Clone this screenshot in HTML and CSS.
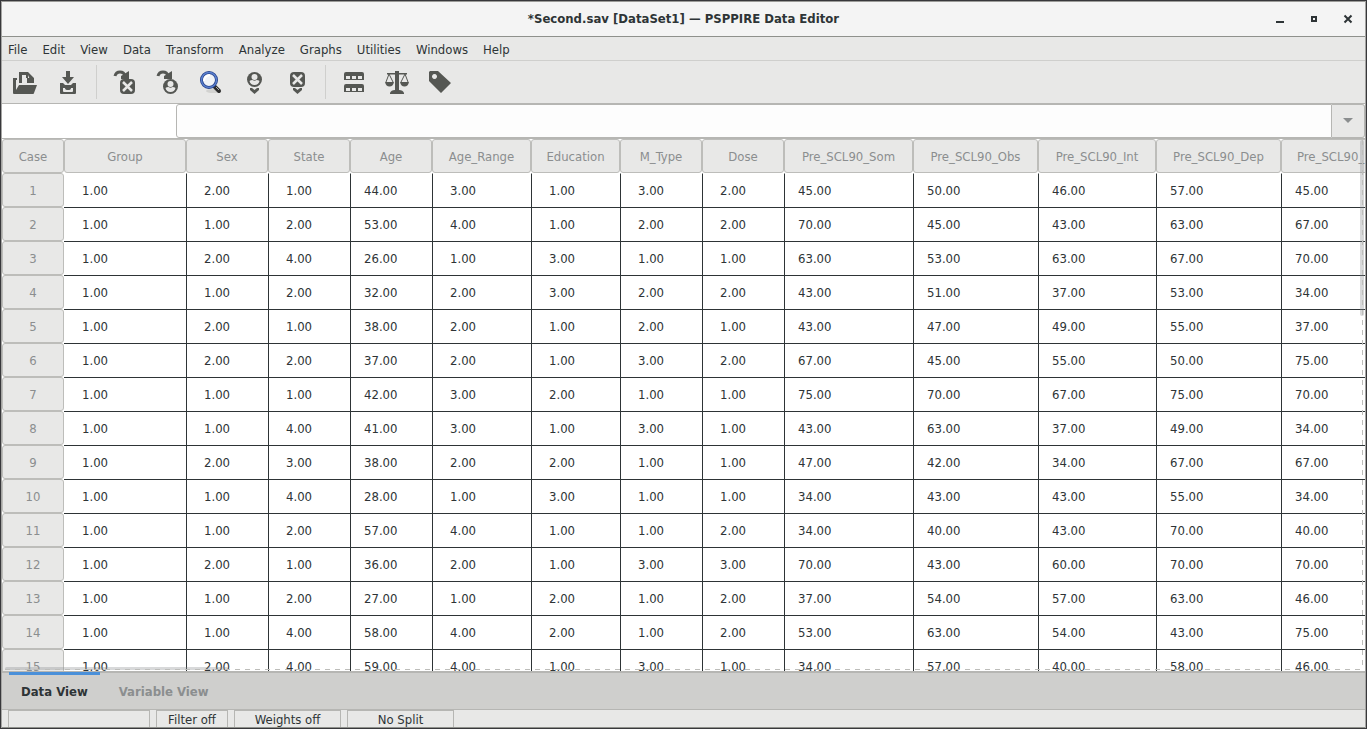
FILE: index.html
```html
<!DOCTYPE html>
<html lang="en">
<head>
<meta charset="utf-8">
<title>PSPPIRE Data Editor</title>
<link rel="stylesheet" href="styles.css">
</head>
<body>
<div class="window">
  <header class="titlebar">
    <h1 class="title">*Second.sav [DataSet1] — PSPPIRE Data Editor</h1>
    <div class="controls">
      <button class="control" aria-label="Minimize"><svg width="10" height="10" viewBox="0 0 10 10"><path d="M1 7h8v2H1z"/></svg></button>
      <button class="control" aria-label="Maximize"><svg width="10" height="10" viewBox="0 0 10 10"><path fill-rule="evenodd" d="M2 2h6v6H2zM4 4v2h2V4z"/></svg></button>
      <button class="control" aria-label="Close"><svg width="10" height="10" viewBox="0 0 10 10"><path d="M1.500 1.500l7 7M8.500 1.500l-7 7" stroke="#2e3436" stroke-width="2"/></svg></button>
    </div>
  </header>
  <nav class="menubar">
    <button class="menu">File</button><button class="menu">Edit</button><button class="menu">View</button><button class="menu">Data</button><button class="menu">Transform</button><button class="menu">Analyze</button><button class="menu">Graphs</button><button class="menu">Utilities</button><button class="menu">Windows</button><button class="menu">Help</button>
  </nav>
  <div class="toolbar">
    <button class="tool" aria-label="Open"><svg class="icon" viewBox="0 0 24 24"><path d="M0 8h4v2H3v10l3-5h18l-3 8q0 1-1 1H1q-1 0-1-1z"/><path d="M6 13V2h9l6 6v5h-7V8h-1V5H9v8zM15 5v3h3v4"/></svg></button>
    <button class="tool" aria-label="Save"><svg class="icon" viewBox="0 0 24 24"><path d="M10 1h4v6h4l-6 7-6-7h4z"/><path fill-rule="evenodd" d="M4 13h3l2 2h6l2-2h3v10q0 1-1 1H5q-1 0-1-1zM7 18v3q0 1 1 1h8q1 0 1-1v-3h-2q0 2-3 2t-3-2z"/></svg></button>
    <span class="separator"></span>
    <button class="tool" aria-label="Go to case"><svg class="icon" viewBox="0 0 24 24"><path class="line" d="M2 6q1-4 5-4t5 4"/><path d="M8 6l8-5v8H8z"/><rect x="7" y="9" width="15" height="15" rx="4"/><path class="cut" d="M10 12l9 9M19 12l-9 9"/></svg></button>
    <button class="tool" aria-label="Go to variable"><svg class="icon" viewBox="0 0 24 24"><path class="line" d="M2 6q1-4 5-4t5 4"/><path d="M8 6l8-5v8H8z"/><circle cx="14.500" cy="16.500" r="7.500"/><circle class="light" cx="14.500" cy="14" r="3"/><path class="light" d="M9.500 18q1-1 3-1 2 1.500 4 0 2 0 3 1-1 4-5 4t-5-4z"/></svg></button>
    <button class="tool" aria-label="Find"><svg class="icon" viewBox="0 0 24 24"><ellipse cx="14" cy="21" rx="7" ry="2" fill="#d2d2d0"/><path d="M15 16l5 5" stroke="#2b2b2b" stroke-width="4" stroke-linecap="round"/><path d="M17 17l3 3" stroke="#aaa" stroke-width="1"/><circle cx="10" cy="10" r="7.500" fill="#f0f3f8" stroke="#233f88" stroke-width="3"/><circle cx="10" cy="10" r="7.500" fill="none" stroke="#5b80cf" stroke-width="1.500"/><path d="M5 11q0-5 6-6" fill="none" stroke="#fff" stroke-width="2"/></svg></button>
    <button class="tool" aria-label="Insert case"><svg class="icon" viewBox="0 0 24 24"><circle cx="12.500" cy="9.500" r="7.500"/><circle class="light" cx="12.500" cy="7" r="3"/><path class="light" d="M7.500 11q1-1 3-1 2 1.500 4 0 2 0 3 1-1 4-5 4t-5-4z"/><path d="M8 18h2l2.500 2 2.500-2h2v2l-4.500 4L8 20z"/></svg></button>
    <button class="tool" aria-label="Insert variable"><svg class="icon" viewBox="0 0 24 24"><rect x="5" y="2" width="15" height="15" rx="4"/><path class="cut" d="M8 5l9 9M17 5l-9 9"/><path d="M8 18h2l2.500 2 2.500-2h2v2l-4.500 4L8 20z"/></svg></button>
    <span class="separator"></span>
    <button class="tool" aria-label="Split file"><svg class="icon" viewBox="0 0 24 24"><path fill-rule="evenodd" d="M4 2h16q2 0 2 2v6H2V4q0-2 2-2zM4 6v3h4V6zM10 6v3h4V6zM16 6v3h4V6zM4 14h16q2 0 2 2v6H2v-6q0-2 2-2zM4 18v3h4v-3zM10 18v3h4v-3zM16 18v3h4v-3z"/></svg></button>
    <button class="tool" aria-label="Weight cases"><svg class="icon" viewBox="0 0 24 24"><path d="M10 1h4v2h8v1.500h-8V20q4 0 5 3v1H5v-1q1-3 5-3V4.500H2V3h8z"/><path class="thin" d="M4 4L1 12M4 4l4 8M20 4l-4 8M20 4l3 8"/><path d="M0 12h9q-1 4.500-4.500 4.500T0 12zM15 12h9q-1 4.500-4.500 4.500T15 12z"/></svg></button>
    <button class="tool" aria-label="Value labels"><svg class="icon" viewBox="0 0 24 24"><path fill-rule="evenodd" d="M1 2l1-1h8l13 12-10 10L1 11zM6.500 4a2.500 2.500 0 1 0 .01 0z"/></svg></button>
  </div>
  <div class="entry-row">
    <output class="cell-ref" aria-label="Current cell"></output>
    <input class="cell-entry" type="text" aria-label="Cell value">
    <button class="entry-drop" aria-label="Show values"><svg width="10" height="6" viewBox="0 0 10 6"><path d="M0 0h10L5 5z" fill="#8b8e8f"/></svg></button>
  </div>
  <main class="sheet">
    <table class="grid">
      <colgroup><col class="w-case"><col class="w-group"><col class="w-82"><col class="w-82"><col class="w-82"><col class="w-99"><col class="w-89"><col class="w-82"><col class="w-82"><col class="w-129"><col class="w-125"><col class="w-118"><col class="w-125"><col class="w-125"></colgroup>
      <thead><tr><th>Case</th><th>Group</th><th>Sex</th><th>State</th><th>Age</th><th>Age_Range</th><th>Education</th><th>M_Type</th><th>Dose</th><th>Pre_SCL90_Som</th><th>Pre_SCL90_Obs</th><th>Pre_SCL90_Int</th><th>Pre_SCL90_Dep</th><th class="clipped">Pre_SCL90_</th></tr></thead>
      <tbody id="cases"></tbody>
    </table>
    <div class="scroll-y"></div>
    <div class="scroll-x"></div>
    <div class="edge-y"></div>
    <div class="edge-x"></div>
  </main>
  <div class="tabs" role="tablist">
    <button class="tab active" role="tab" aria-selected="true">Data View</button>
    <button class="tab" role="tab" aria-selected="false">Variable View</button>
  </div>
  <footer class="statusbar">
    <span class="status wide"></span>
    <span class="status narrow">Filter off</span>
    <span class="status">Weights off</span>
    <span class="status">No Split</span>
  </footer>
</div>
<script src="data.js"></script>
</body>
</html>
```

FILE: styles.css
```css
* { box-sizing: border-box; }

body {
  margin: 0;
  font: 13px/18px "DejaVu Sans Condensed", "Noto Sans", sans-serif;
  color: #2e3436;
}

button, input {
  font: inherit;
  color: inherit;
  background: none;
  border: 0;
  border-radius: 0;
  margin: 0;
  padding: 0;
}

.window {
  display: flex;
  flex-direction: column;
  height: 100vh;
  padding: 0 1px;
  border: 1px solid #38383b;
  background: #a5a5a3;
  overflow: hidden;
}

.titlebar {
  position: relative;
  flex: none;
  height: 36px;
  display: flex;
  align-items: center;
  justify-content: center;
  background: #f4f4f4;
  border-top: 1px solid #9b9b98;
  border-bottom: 1px solid #8f918c;
}

.title { margin: 0; font-size: 13px; font-weight: bold; }

.controls {
  position: absolute;
  right: 0;
  display: flex;
}

.control { width: 34px; height: 34px; display: grid; place-items: center; }
.control svg { fill: #2e3436; }

.menubar {
  flex: none;
  display: flex;
  height: 24px;
  background: #e8e8e7;
  border-bottom: 1px solid #cfcfcd;
}

.menu { padding: 2px 8px 0 7px; }
.menu:first-child { padding-left: 6px; }

.toolbar {
  flex: none;
  display: flex;
  align-items: center;
  height: 43px;
  padding-left: 1px;
  background: #e8e8e7;
  border-bottom: 1px solid #b6b6b3;
}

.tool { width: 43px; height: 40px; display: grid; place-items: center; }
.icon { width: 24px; height: 24px; fill: #555753; }
.icon .line { fill: none; stroke: #555753; stroke-width: 3; }
.icon .thin { fill: none; stroke: #555753; stroke-width: 1; }
.icon .cut { fill: none; stroke: #e8e8e7; stroke-width: 2.5; }
.icon .light { fill: #e8e8e7; }
.separator { width: 1px; height: 34px; margin: 0 6px 0 7px; background: #cfcfcd; }

.entry-row {
  flex: none;
  display: flex;
  height: 34px;
  background: #fff;
}

.cell-ref { width: 174px; }

.cell-entry {
  flex: 1;
  min-width: 0;
  padding: 0 8px;
  background: #fdfdfd;
  border: 1px solid #b6b6b3;
  border-radius: 3px 0 0 3px;
}

.entry-drop {
  width: 33px;
  display: grid;
  place-items: center;
  background: #e8e8e7;
  border: 1px solid #b6b6b3;
  border-left: 0;
  border-radius: 0 3px 3px 0;
}

.sheet {
  position: relative;
  flex: 1;
  min-height: 0;
  border-top: 1px solid #b6b6b3;
  background: #fff;
  overflow: hidden;
}

.grid { width: 1394px; table-layout: fixed; border-collapse: separate; border-spacing: 0; }
.w-case { width: 62px; }
.w-group { width: 122px; }
.w-82 { width: 82px; }
.w-89 { width: 89px; }
.w-99 { width: 99px; }
.w-118 { width: 118px; }
.w-125 { width: 125px; }
.w-129 { width: 129px; }

.grid th {
  height: 34px;
  padding: 2px 0 0;
  font-weight: normal;
  color: #8b8e8f;
  background: #e8e8e7;
  border: 1px solid #bdbdba;
  border-radius: 3px;
}
.grid th.clipped { text-align: left; padding-left: 15px; }

.grid td {
  height: 34px;
  padding: 0 0 0 17px;
  border-top: 1px solid #2e3436;
  border-left: 1px solid #2e3436;
}
.grid td.two-digit { padding-left: 13px; }
.grid tr:first-child td { border-top-color: #fff; }
.grid td:nth-child(2) { border-left-width: 0; padding-left: 18px; }

.scroll-y { position: absolute; top: 1px; right: 1px; width: 4px; height: 176px; background: #8b8e8f55; border-radius: 2px; }
.scroll-x { position: absolute; left: 3px; bottom: 1px; width: 223px; height: 3px; background: #8b8e8f55; border-radius: 2px; }
.edge-x, .edge-y { position: absolute; }
.edge-x { left: 3px; right: 2px; bottom: 1px; height: 1px; background: repeating-linear-gradient(90deg, #bdbdba 0 5px, transparent 5px 10px); }
.edge-y { top: 1px; bottom: 2px; right: 2px; width: 1px; background: repeating-linear-gradient(#bdbdba 0 5px, transparent 5px 10px); }

.tabs {
  flex: none;
  display: flex;
  height: 39px;
  padding-left: 7px;
  background: #cfcfcd;
  border-top: 2px solid #b6b6b3;
  border-bottom: 1px solid #b6b6b3;
}

.tab {
  margin-top: -1px;
  padding: 0 12px;
  margin-right: 7px;
  font-weight: bold;
  color: #8b8e8f;
  border-top: 3px solid transparent;
}
.tab.active { color: #2e3436; border-top-color: #4a90d9; }

.statusbar {
  flex: none;
  display: flex;
  gap: 6px;
  height: 18px;
  padding-left: 6px;
  background: #e8e8e7;
  border-bottom: 1px solid #8f918c;
}

.status {
  width: 107px;
  line-height: 18px;
  text-align: center;
  border: 1px solid #b6b6b3;
  border-bottom: 0;
}
.status.wide { width: 142px; }
.status.narrow { width: 72px; }
```

FILE: data.js
```js
const cases = [
  "1 2 1 44 3 1 3 2 45 50 46 57 45",
  "1 1 2 53 4 1 2 2 70 45 43 63 67",
  "1 2 4 26 1 3 1 1 63 53 63 67 70",
  "1 1 2 32 2 3 2 2 43 51 37 53 34",
  "1 2 1 38 2 1 2 1 43 47 49 55 37",
  "1 2 2 37 2 1 3 2 67 45 55 50 75",
  "1 1 1 42 3 2 1 1 75 70 67 75 70",
  "1 1 4 41 3 1 3 1 43 63 37 49 34",
  "1 2 3 38 2 2 1 1 47 42 34 67 67",
  "1 1 4 28 1 3 1 1 34 43 43 55 34",
  "1 1 2 57 4 1 1 2 34 40 43 70 40",
  "1 2 1 36 2 1 3 3 70 43 60 70 70",
  "1 1 2 27 1 2 1 2 37 54 57 63 46",
  "1 1 4 58 4 2 1 2 53 63 54 43 75",
  "1 2 4 59 4 1 3 1 34 57 40 58 46"
];

const body = document.getElementById("cases");
cases.forEach((line, index) => {
  const row = body.insertRow();
  const head = document.createElement("th");
  head.scope = "row";
  head.textContent = index + 1;
  row.append(head);
  line.split(" ").forEach((value) => {
    const cell = row.insertCell();
    cell.textContent = value + ".00";
    if (value.length > 1) cell.className = "two-digit";
  });
});
```
